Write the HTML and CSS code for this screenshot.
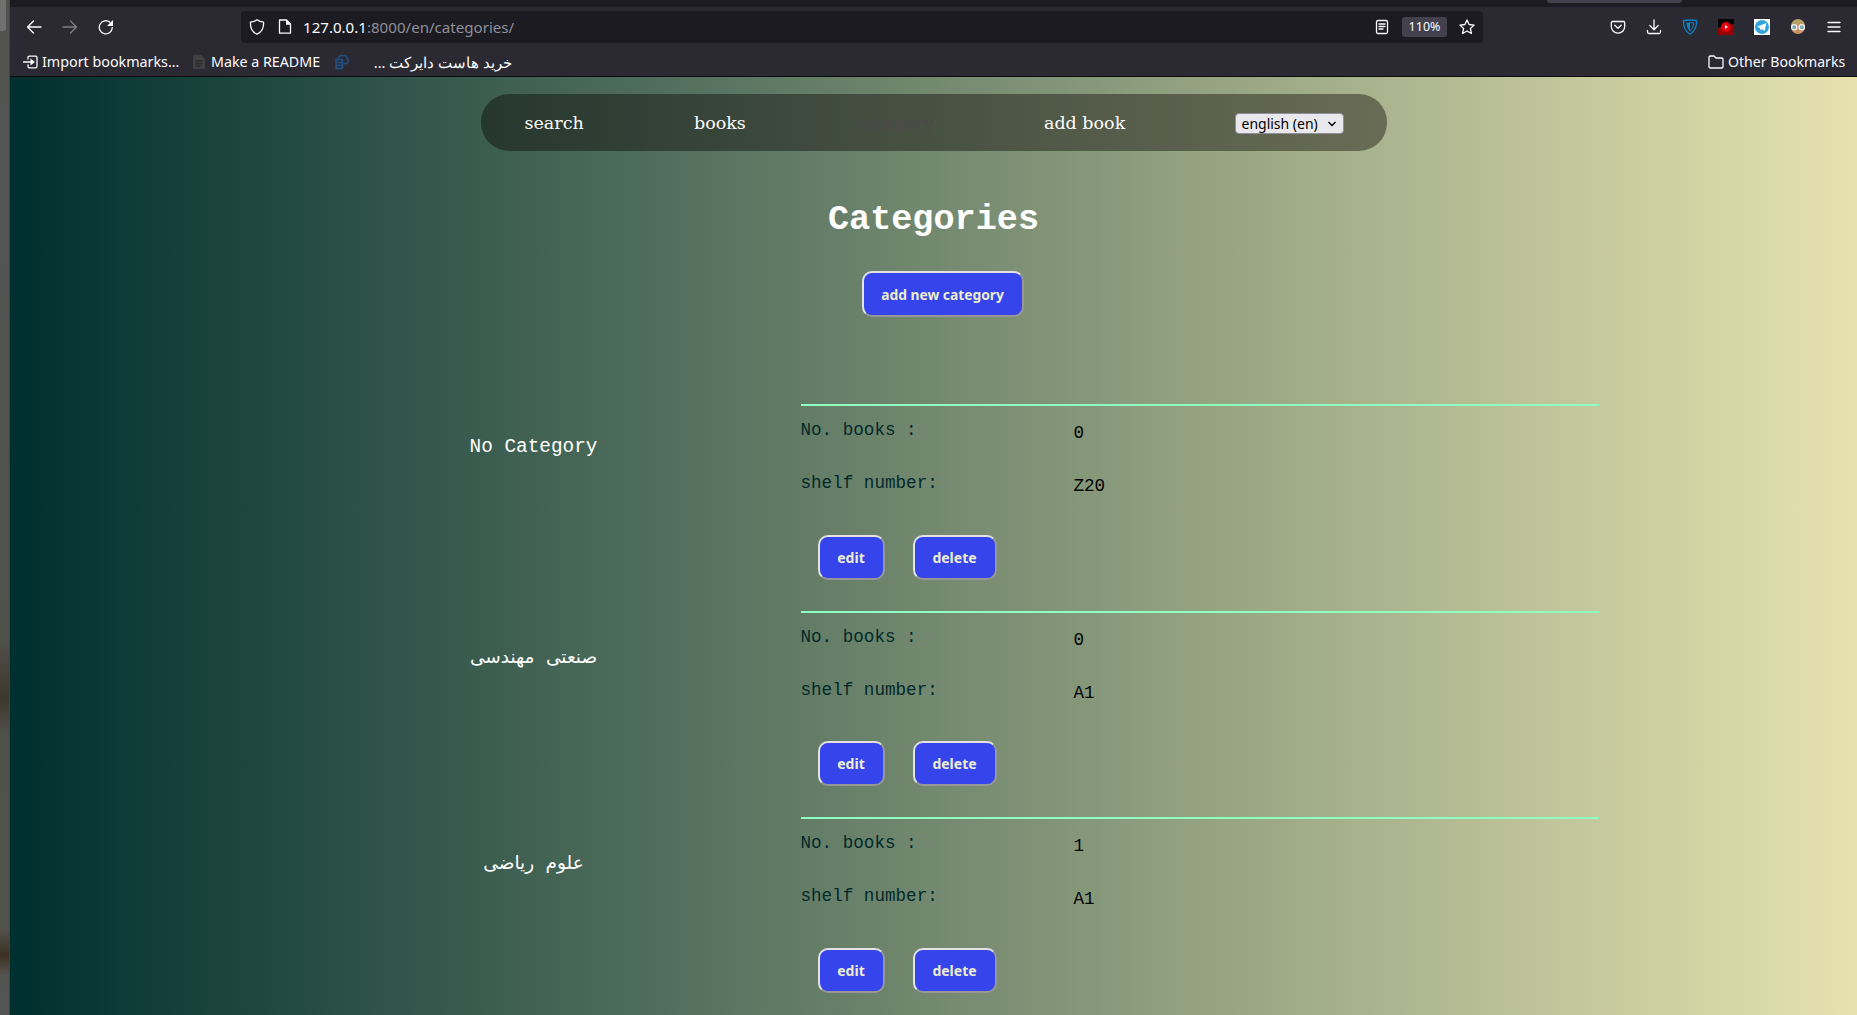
FILE: index.html
```html
<!DOCTYPE html>
<html lang="en">
<head>
<meta charset="utf-8">
<title>Categories</title>
<link rel="stylesheet" href="styles.css">
</head>
<body>
<div class="desktop"><div class="dock"></div></div>
<div class="window">
  <header class="chrome">
    <div class="tabstrip"><div class="tab"></div></div>
    <div class="toolbar">
      <div class="history">
        <svg viewBox="0 0 16 16" width="16" height="16"><path d="M15 8H1.5M7.5 2 1.5 8l6 6"/></svg>
        <svg class="dim" viewBox="0 0 16 16" width="16" height="16"><path d="M1 8h13.500M8.500 2l6 6-6 6"/></svg>
        <svg viewBox="0 0 16 16" width="16" height="16"><path d="M14.300 8.500A6.500 6.500 0 1 1 12 3.300" /><path class="solid" d="M15 1v6H9z"/></svg>
      </div>
      <div class="urlbar">
        <svg viewBox="0 0 16 16" width="16" height="16"><path d="M8 .8C6 2.300 3.800 3 1.400 3.200 1.200 9 3.500 13.300 8 15.200c4.500-1.900 6.800-6.200 6.600-12C12.200 3 10 2.300 8 .8z"/></svg>
        <svg class="page" viewBox="0 0 16 16" width="16" height="16"><path d="M3.500 1h6L13.500 5v9.200H2.500V1z"/><path class="solid" d="M9 1v4.700h4.700z"/></svg>
        <span class="url"><b>127.0.0.1</b>:8000/en/categories/</span>
        <svg class="reader" viewBox="0 0 16 16" width="16" height="16"><rect x="2.500" y="1.500" width="11" height="13" rx="1.500"/><path d="M5 5h6M5 7.500h6M5 10h4"/></svg>
        <span class="zoom">110%</span>
        <svg viewBox="0 0 16 16" width="16" height="16"><path d="m8 .9 2.100 4.600 5 .6-3.700 3.400 1 5L8 12l-4.400 2.500 1-5L.9 6.100l5-.6z"/></svg>
      </div>
      <div class="actions">
        <svg viewBox="0 0 16 16" width="16" height="16"><path d="M2.500 2.500h11c.7 0 1.200.5 1.200 1.200V7.500a6.700 6.700 0 0 1-13.400 0V3.700c0-.7.500-1.200 1.200-1.200zM4.800 6.300 8 9.300l3.200-3"/></svg>
        <svg viewBox="0 0 16 16" width="16" height="16"><path d="M8 1v9.500M3.800 6.500 8 10.700l4.200-4.200M1.500 11.500V13c0 .9.600 1.500 1.500 1.500h10c.9 0 1.500-.6 1.500-1.500v-1.500"/></svg>
        <svg viewBox="0 0 16 16" width="16" height="16"><path class="blue" d="M1.500 1.500q6.500-1 13 0Q15 11 8 15.200 1 11 1.500 1.500z"/><path class="bluefill" d="M8 3.500H4.500Q4.500 9.500 8 12z"/><path class="blue thin" d="M8 3.800h3.700Q11.500 9.500 8 12.200"/></svg>
        <svg viewBox="0 0 16 16" width="16" height="16"><path fill="#000" stroke="none" d="M0 0h16v8H0z"/><path fill="#950004" stroke="none" d="M0 10l3-2 4 2 5-4 4-1v11H0z"/><circle cx="8" cy="8" r="5" fill="#e3000b" stroke="none"/><path fill="#fff" stroke="none" d="M7 6l3 2-3 2z"/></svg>
        <svg viewBox="0 0 16 16" width="16" height="16"><path fill="#fff" stroke="none" d="M0 0h16v16H0z"/><circle cx="8" cy="8" r="7" fill="#30a5dc" stroke="none"/><path fill="#fff" stroke="none" d="M3 7.800 12.300 4l-1.600 8-3-2-1.200 1.500-.5-2.500z"/></svg>
        <svg viewBox="0 0 16 16" width="16" height="16"><circle cx="8" cy="8" r="7" fill="#c99263" stroke="none"/><path fill="#b5a068" stroke="none" d="M1 7a7 7 0 0 1 14 0L10 4z"/><circle cx="4.200" cy="8.300" r="2.600" fill="#79a7b5" stroke="#eee"/><circle cx="11.800" cy="8.300" r="2.600" fill="#79a7b5" stroke="#eee"/></svg>
        <svg viewBox="0 0 16 16" width="16" height="16"><path d="M2 3.500h12M2 8h12M2 12.500h12"/></svg>
      </div>
    </div>
    <div class="bookmarks">
      <svg viewBox="0 0 16 16" width="16" height="16"><path d="M5 5V3.500c0-.8.500-1.300 1.300-1.300h6.400c.8 0 1.300.5 1.300 1.300v9c0 .8-.5 1.300-1.300 1.300H6.300c-.8 0-1.300-.5-1.300-1.300V11M0.500 8h8"/><path class="solid" d="M7.500 4.500 12 8l-4.500 3.500z"/></svg>
      <span class="bm bm-import">Import bookmarks…</span>
      <svg class="doc" viewBox="0 0 16 16" width="16" height="16"><path fill="#414141" stroke="none" d="M2 1h8l4 4v10H2z"/><path stroke="#2b2a33" d="M5 7h6M5 9.500h6M5 12h4"/></svg>
      <span class="bm bm-readme">Make a README</span>
      <svg class="host" viewBox="0 0 16 16" width="16" height="16"><g fill="none" stroke="#23507f" stroke-width="1.500"><path d="M4.500 4C5 2 7 .8 9.500 1.700c2-.5 3.500.8 3.200 2.300C15 5 15 8.500 12.500 9.500H10"/><path d="M2 5.500h6.500v9H2zM2 8.500h6.500M2 11.500h6.500"/></g></svg>
      <span class="bm bm-host" dir="rtl">خرید هاست دایرکت ...</span>
      <svg class="folder" viewBox="0 0 16 16" width="16" height="16"><path d="M1 3.300C1 2.500 1.500 2 2.300 2H6l2 2h5.700c.8 0 1.300.5 1.300 1.300v7.400c0 .8-.5 1.300-1.300 1.300H2.300c-.8 0-1.300-.5-1.300-1.300z"/></svg>
      <span class="bm bm-other">Other Bookmarks</span>
    </div>
  </header>
  <main class="page-body">
    <nav class="nav">
      <a>search</a><a>books</a><a class="current">category</a><a>add book</a>
      <div class="lang"><span>english (en)</span><svg viewBox="0 0 8 6" width="8" height="6"><path d="M.5 1 4 4.500 7.500 1"/></svg></div>
    </nav>
    <h1>Categories</h1>
    <button class="btn btn-add">add new category</button>
    <section class="list">
      <article class="row">
        <h2>No Category</h2>
        <div class="card"><dl><dt>No. books :</dt><dd>0</dd><dt>shelf number:</dt><dd>Z20</dd></dl>
        <div class="buttons"><button class="btn btn-edit">edit</button><button class="btn btn-delete">delete</button></div></div>
      </article>
      <article class="row">
        <h2 class="fa">صنعتی مهندسی</h2>
        <div class="card"><dl><dt>No. books :</dt><dd>0</dd><dt>shelf number:</dt><dd>A1</dd></dl>
        <div class="buttons"><button class="btn btn-edit">edit</button><button class="btn btn-delete">delete</button></div></div>
      </article>
      <article class="row">
        <h2 class="fa">علوم ریاضی</h2>
        <div class="card"><dl><dt>No. books :</dt><dd>1</dd><dt>shelf number:</dt><dd>A1</dd></dl>
        <div class="buttons"><button class="btn btn-edit">edit</button><button class="btn btn-delete">delete</button></div></div>
      </article>
    </section>
  </main>
</div>
</body>
</html>
```
FILE: styles.css
```css
* { box-sizing: border-box; }
body { margin: 0; display: flex; width: 1857px; height: 1015px; overflow: hidden; }

.desktop {
  width: 10px;
  flex: none;
  border-right: 1px solid #46423e;
  background: linear-gradient(to bottom, #51514c 0, #555554 150px, #51504b 640px, #3d382c 698px, #51504b 735px, #52514c 930px, #3c3021 955px, #555350 975px, #555 1015px);
}
.dock { width: 6px; height: 31px; background: #70716f; border-radius: 0 0 3px 0; }
.window { width: 1847px; height: 1015px; display: flex; flex-direction: column; }

.chrome { height: 77px; background: #2b2a33; border-bottom: 1px solid #0c0c0d; font-family: "Noto Sans", sans-serif; color: #fbfbfe; flex: none; }
.chrome svg { fill: none; stroke: #fbfbfe; stroke-width: 1.3; stroke-linejoin: round; stroke-linecap: round; flex: none; display: block; }
.chrome .solid { fill: #fbfbfe; stroke: none; }
.chrome .dim { opacity: .4; }
.chrome .blue { stroke: #0a84c8; }
.chrome .thin { stroke-width: 1; }
.chrome .bluefill { fill: #0a84c8; stroke: none; }
.tabstrip { height: 7px; background: #1c1b22; padding-left: 1537px; }
.tab { width: 135px; height: 3px; background: #42414d; border-radius: 0 0 4px 4px; }
.toolbar { height: 40px; display: flex; align-items: center; }
.history { display: flex; gap: 20px; padding-left: 16px; width: 231px; }
.urlbar { width: 1242px; height: 32px; background: #1c1b22; border-radius: 4px; display: flex; align-items: center; padding: 0 8px 0 8px; }
.page { margin-left: 12px; }
.url { margin-left: 10px; font-size: 15.100px; color: #8f8f98; white-space: nowrap; flex: 1; }
.url b { font-weight: 400; color: #fbfbfe; }
.zoom { width: 45px; height: 20px; margin: 0 12px 0 12px; background: #42414d; border-radius: 3px; font-size: 12.500px; line-height: 20px; text-align: center; }
.actions { display: flex; gap: 20px; margin-left: 127px; }
.bookmarks { height: 29px; display: flex; align-items: center; padding: 0 11px 0 13px; font-size: 14px; white-space: nowrap; }
.bm { line-height: 20px; }
.bm-import { margin-left: 3px; width: 138px; font-size: 14.300px; }
.doc { margin-left: 11px; }
.bm-readme { margin-left: 4px; width: 110px; font-size: 14.250px; }
.host { margin-left: 13px; }
.bm-host { margin-left: 25px; width: 137px; font-size: 14.700px; }
.folder { margin-left: auto; }
.bm-other { margin-left: 4px; width: 118px; font-size: 14.100px; }

.page-body { flex: 1; display: flex; flex-direction: column; align-items: center; background: linear-gradient(to right, #002f2f, #e6e2af); padding-top: 17px; font-family: "Liberation Mono", monospace; font-size: 17.600px; }
.nav { width: 906px; height: 57px; flex: none; padding: 0 42px 0 44px; display: flex; justify-content: space-between; align-items: center; background: rgba(8, 0, 0, .4); border-radius: 28px; font-family: "DejaVu Serif", serif; font-size: 17.500px; color: #fff; }
.nav .current { color: #4e484c; }
.lang { width: 109px; height: 21px; margin-top: 2px; padding: 0 7px 0 5px; display: flex; align-items: center; justify-content: space-between; background: #e9e9ed; border: 1px solid #8f8f9d; border-radius: 4px; color: #000; font: 14px "Noto Sans", sans-serif; }
.lang svg { fill: none; stroke: #000; stroke-width: 1.400; }
h1 { margin: 49px 0 0; font-size: 35.200px; line-height: 40px; color: #fff; }

.btn { height: 45px; padding: 0; border: 2px solid; border-color: #e3e3e3 #979797 #979797 #e3e3e3; border-radius: 10px; background: #3545eb; color: #eeeccf; font: 700 14px "Noto Sans", sans-serif; white-space: nowrap; }
.btn-add { width: 162px; height: 46px; margin: 31px 0 0 18px; font-size: 13.800px; flex: none; }
.btn-edit { width: 67px; }
.btn-delete { width: 84px; }

.list { width: 1130px; margin: 87px 0 0 200px; }
.row { height: 206.500px; display: flex; }
h2 { width: 130px; margin: 31px 202px 0 0; display: flex; justify-content: center; font-weight: 400; font-size: 19.360px; line-height: 24px; color: #fff; white-space: pre; flex: none; }
.fa { margin-top: 34px; font-family: "DejaVu Sans", sans-serif; font-size: 18.500px; word-spacing: 5.500px; }
.card { width: 798px; border-top: 2px solid #8fffc1; }
dl { margin: 12px 0 0; display: grid; grid-template-columns: 273px 1fr; grid-auto-rows: 53px; line-height: 24px; }
dt { color: #022a2c; }
dd { margin: 3px 0 0; color: #000; }
.buttons { display: flex; gap: 28px; margin: 10.500px 0 0 17px; }
```
